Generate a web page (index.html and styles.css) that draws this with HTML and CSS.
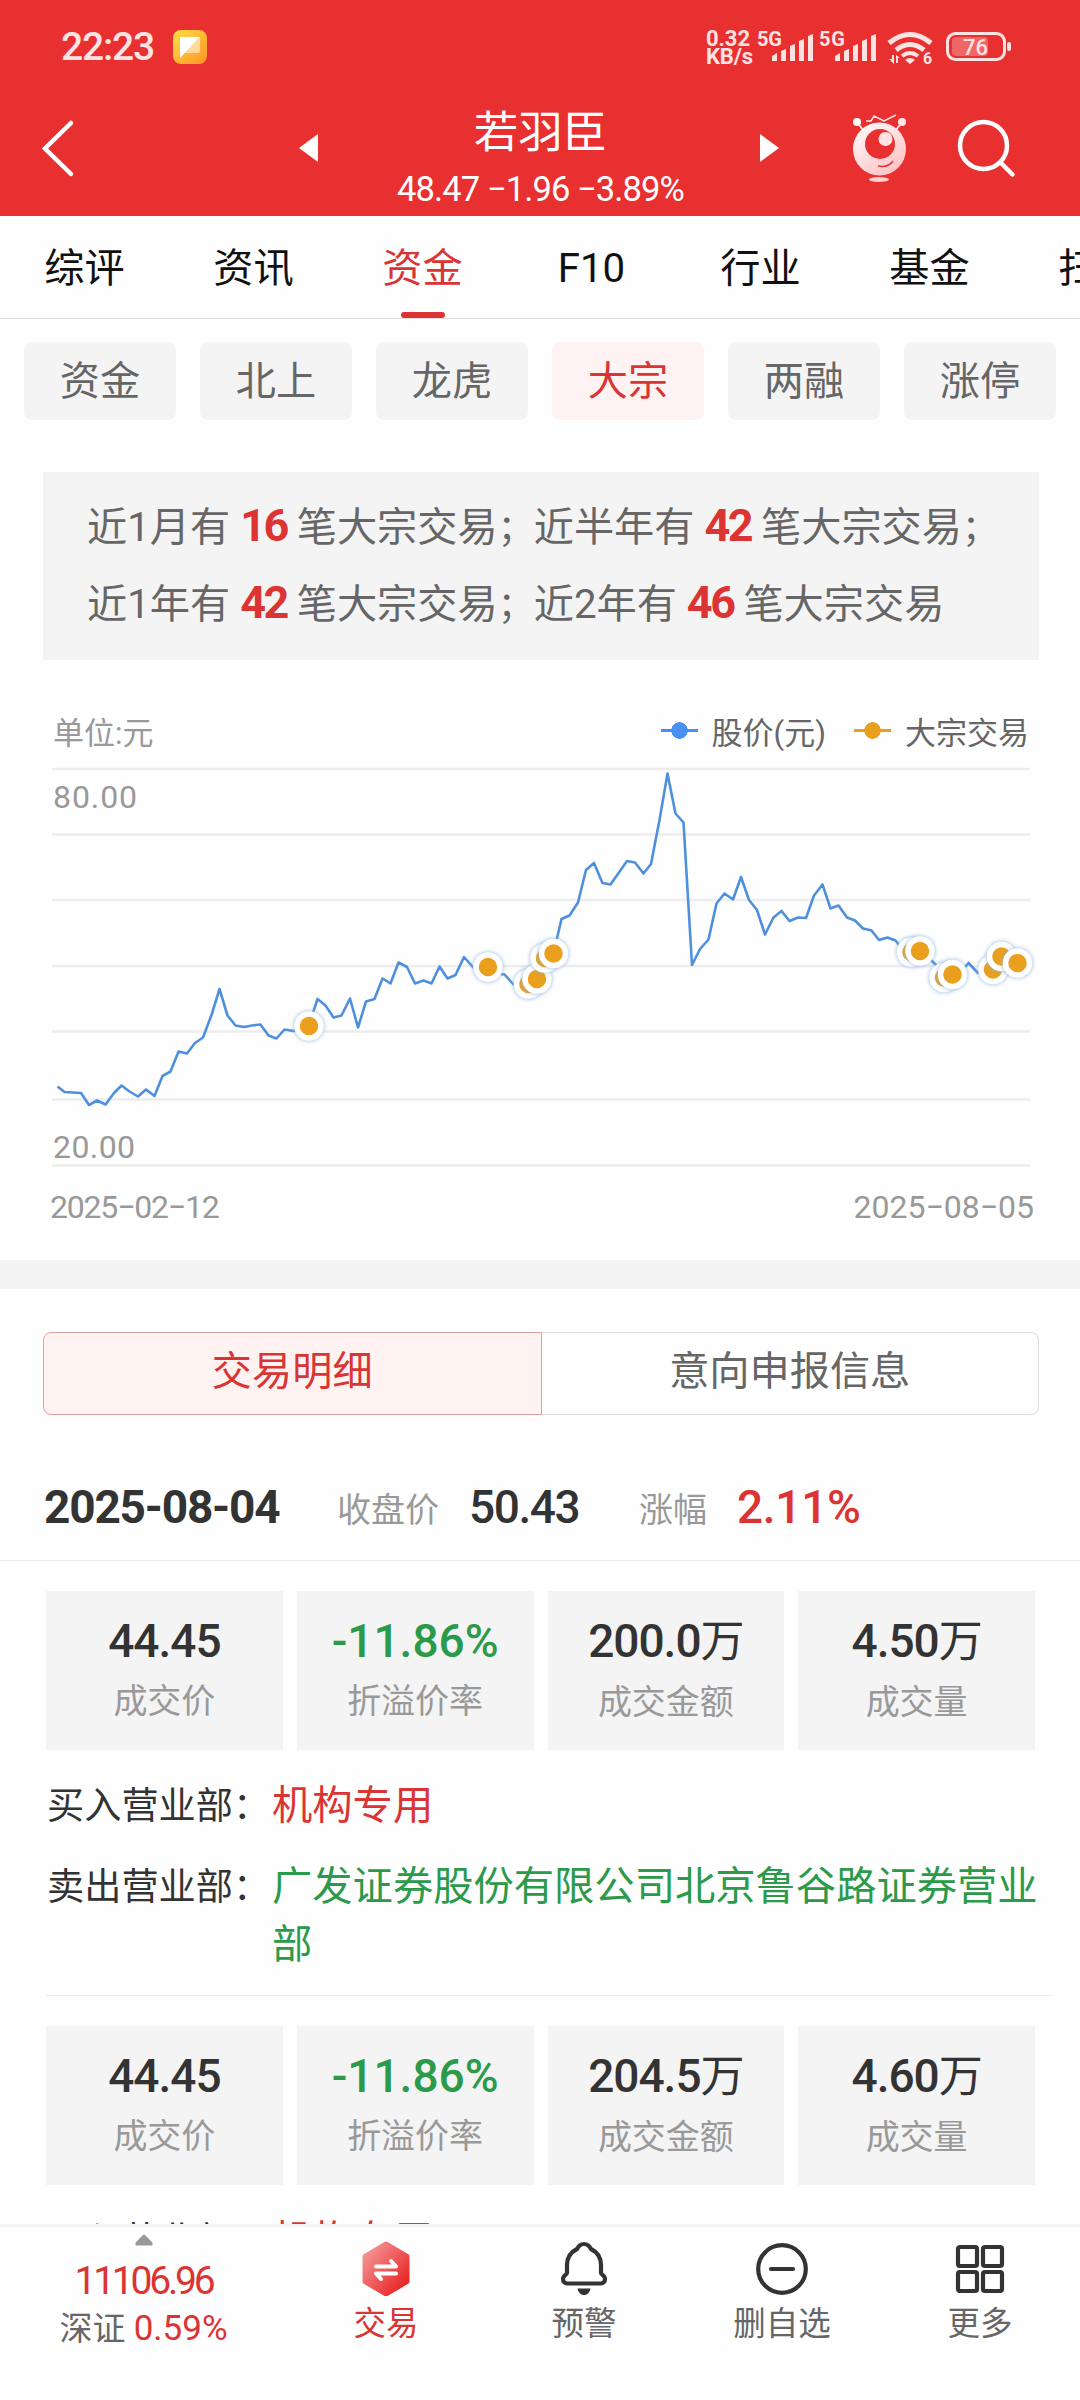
FILE: index.html
```
<!DOCTYPE html>
<html lang="zh-CN">
<head>
  <meta charset="UTF-8" />
  <title>若羽臣 - 大宗交易</title>
  <link rel="stylesheet" href="styles.css">
</head>
<body>
  <header class="header">
    <div class="status">
      <span class="time">22:23</span>
      <svg class="note-icon" viewBox="0 0 34 34">
        <defs>
          <linearGradient id="note" x1="0" y1="0" x2="1" y2="1">
            <stop offset="0" stop-color="#ffdf45" />
            <stop offset="1" stop-color="#ff9326" />
          </linearGradient>
        </defs>
        <rect width="34" height="34" rx="8" fill="url(#note)" />
        <path d="M27 7v14a2 2 0 0 1-2 2H12z" fill="#fff" opacity=".5" />
        <path d="M7 7h20L7 28z" fill="#fff" />
      </svg>
      <svg class="status-icons" viewBox="704 24 312 46">
        <g class="status-text">
          <text x="706" y="46" textLength="44">0.32</text>
          <text x="706" y="64" textLength="47">KB/s</text>
          <text x="757" y="46" font-size="20" textLength="25">5G</text>
          <text x="819" y="46" font-size="20" textLength="26">5G</text>
          <text x="923" y="64" font-size="16">6</text>
        </g>
        <g fill="#ffe3e3">
          <path d="M772 61v-5l5-3v8zM781 61v-10l5-2v12zM790 61v-15l5-2v17zM799 61v-20l5-2v22zM808 61v-25l5-2v27z" />
          <path d="M835 61v-5l5-3v8zM844 61v-10l5-2v12zM853 61v-15l5-2v17zM862 61v-20l5-2v22zM871 61v-25l5-2v27z" />
          <path d="M905 60q5-4 10 0l-5 4z" />
          <path d="M889 59h3v-4h2v9zM896 63v-8l4 3h-2v5z" />
          <rect x="1007" y="42" width="4" height="9" rx="2" />
        </g>
        <g fill="none" stroke="#ffe3e3" stroke-width="5">
          <path d="M889 43q21-17 42 0" />
          <path d="M896 50q14-11 28 0" />
          <path d="M902 56q8-6 16 0" stroke-width="4" />
        </g>
        <rect x="947.5" y="33.5" width="57" height="26" rx="8" fill="none" stroke="#ffe3e3" stroke-width="3" />
        <rect x="952" y="37" width="36" height="19" rx="4" fill="#f06565" />
        <text x="963" y="55" font-size="22" textLength="25" class="battery">76</text>
      </svg>
    </div>
    <div class="nav">
      <svg class="nav-back" viewBox="0 94 90 122"><path d="M71 123L45 148.5L71 174" /></svg>
      <svg class="nav-prev" viewBox="294 94 30 122"><path d="M299 148l19-14v28z" /></svg>
      <div class="title">
        <h1>若羽臣</h1>
        <p>48.47 −1.96 −3.89%</p>
      </div>
      <svg class="nav-next" viewBox="754 94 30 122"><path d="M779 148l-19-14v28z" /></svg>
      <svg class="nav-robot" viewBox="844 94 70 122">
        <defs>
          <linearGradient id="robot" x1="0" y1="0" x2=".7" y2="1">
            <stop offset="0" stop-color="#fff" />
            <stop offset="1" stop-color="#ffc3c5" />
          </linearGradient>
        </defs>
        <g fill="none" stroke="#ffe6e6" stroke-width="2">
          <path d="M857 122l6 8M902 122l-6 8" />
          <path d="M866 121h5l3-5 10 5 12-6" stroke-width="1.5" />
        </g>
        <circle cx="857" cy="122" r="4" fill="#fff" />
        <circle cx="902" cy="122" r="4" fill="#ffe6e6" />
        <circle cx="879.5" cy="149" r="26.5" fill="url(#robot)" />
        <circle cx="880" cy="144" r="15" fill="#e93030" />
        <circle cx="885.5" cy="139" r="7" fill="#ffe3e3" />
        <path d="M878 166q10 2 15-5" fill="none" stroke="#e93030" stroke-width="1.5" />
        <ellipse cx="879" cy="179.5" rx="10" ry="2.5" fill="#ffd0d0" />
      </svg>
      <svg class="nav-search" viewBox="949 94 70 122">
        <circle cx="983.5" cy="145.5" r="23.5" />
        <path d="M1001 163l11.5 11.5" />
      </svg>
    </div>
  </header>

  <nav class="tabs">
    <a>综评</a>
    <a>资讯</a>
    <a class="active">资金</a>
    <a>F10</a>
    <a>行业</a>
    <a>基金</a>
    <a>扫雷</a>
  </nav>

  <div class="pills">
    <a>资金</a>
    <a>北上</a>
    <a>龙虎</a>
    <a class="active">大宗</a>
    <a>两融</a>
    <a>涨停</a>
  </div>

  <div class="summary">
    <p>近1月有 <b>16</b> 笔大宗交易<i>；</i>近半年有 <b>42</b> 笔大宗交易<i>；</i></p>
    <p>近1年有 <b>42</b> 笔大宗交易<i>；</i>近2年有 <b>46</b> 笔大宗交易</p>
  </div>

  <section class="chart">
    <div class="legend">
      <span class="unit">单位:元</span>
      <span class="key price">股价(元)</span>
      <span class="key block">大宗交易</span>
    </div>
    <div class="plot">
      <svg viewBox="0 764 1080 410">
        <g stroke="#ededed" stroke-width="2.5">
          <path d="M52 769H1030M52 834.5H1030M52 900H1030M52 966H1030M52 1031.5H1030M52 1099.5H1030M52 1165.5H1030" />
        </g>
        <polyline class="price-line" points="57.5,1086.5 64.5,1092 81,1093 89,1105 97,1100.5 105.5,1104.5 114,1093 121.5,1085.5 129.5,1091.5 138,1096.5 146,1089.5 154.5,1096 162.5,1076 170.5,1071.5 178.5,1051.5 187,1053.5 195,1043 203,1037.5 211.5,1015 219.5,989 227.5,1015.5 235.5,1025.5 244,1027 252,1025.5 260.5,1024.5 268.5,1035.5 276.5,1038.5 284.5,1029.5 293.5,1031 308.5,1026.5 317.5,999 325.5,1005.5 333.5,1017.5 341.5,1015.5 350,998.5 358,1027.5 366,1001.5 374.5,999 382.5,978.5 390.5,983.5 398.5,962.5 407,967 415,983.5 423.5,980.5 431.5,983.5 439.5,966.5 447.5,978.5 455.5,975 464,957 472,966 480,975 488,967.5 496,973.5 504.5,974.5 513.5,984.5 520.5,985 528.5,984 537,979 545,958 553.5,953.5 561.5,919 569.5,915.5 578,902.5 586,870 594,863 602.5,883 610.5,884.5 627,861 635,862.5 643.5,873.5 651,864 659.5,820 667.5,773.5 675.5,813.5 683.5,822.5 692,965 700,949 708.5,939.5 716.5,903.5 724.5,893.5 733,899.5 741,877 749,900 757,910 765,934.5 773.5,917.5 781.5,911 789.5,921 798,917.5 806,918 814,895.5 822.5,884.5 830.5,908.5 838.5,905.5 847,917.5 855,920.5 863,928.5 871.5,930.5 879,940 887.5,937.5 895.5,940.5 903,950 911.5,952 920,951 928,957 936,965 944,977.5 952.5,974.5 961,972 968.5,963 978,973 993,969.5 1001.5,956.5 1017.5,963 1026,975.5" />
        <g class="deals">
          <circle cx="309" cy="1026" r="12" />
          <circle cx="488" cy="967" r="12" />
          <circle cx="528.5" cy="984" r="12" />
          <circle cx="537" cy="979" r="12" />
          <circle cx="545" cy="958" r="12" />
          <circle cx="553.5" cy="953.5" r="12" />
          <circle cx="911.5" cy="952" r="12" />
          <circle cx="920" cy="951" r="12" />
          <circle cx="944" cy="977.5" r="12" />
          <circle cx="952.5" cy="974.5" r="12" />
          <circle cx="993" cy="969.5" r="12" />
          <circle cx="1001.5" cy="956.5" r="12" />
          <circle cx="1017.5" cy="963" r="12" />
        </g>
        <g class="axis">
          <text x="53" y="808" textLength="84">80.00</text>
          <text x="53" y="1158" textLength="82">20.00</text>
        </g>
      </svg>
    </div>
    <div class="dates">
      <span class="from">2025−02−12</span>
      <span>2025−08−05</span>
    </div>
  </section>

  <div class="segment">
    <a class="active">交易明细</a>
    <a>意向申报信息</a>
  </div>

  <div class="day">
    <strong>2025-08-04</strong>
    <span class="label">收盘价</span>
    <span class="close">50.43</span>
    <span class="label">涨幅</span>
    <span class="change">2.11%</span>
  </div>

  <section class="deal">
    <div class="cards">
      <div class="card"><b>44.45</b><span>成交价</span></div>
      <div class="card"><b class="green">-11.86%</b><span>折溢价率</span></div>
      <div class="card"><b>200.0<i>万</i></b><span>成交金额</span></div>
      <div class="card"><b>4.50<i>万</i></b><span>成交量</span></div>
    </div>
    <div class="broker"><span>买入营业部：</span><em class="red">机构专用</em></div>
    <div class="broker"><span>卖出营业部：</span><em class="green">广发证券股份有限公司北京鲁谷路证券营业部</em></div>
  </section>

  <section class="deal">
    <div class="cards">
      <div class="card"><b>44.45</b><span>成交价</span></div>
      <div class="card"><b class="green">-11.86%</b><span>折溢价率</span></div>
      <div class="card"><b>204.5<i>万</i></b><span>成交金额</span></div>
      <div class="card"><b>4.60<i>万</i></b><span>成交量</span></div>
    </div>
    <div class="broker"><span>买入营业部：</span><em class="red">机构专用</em></div>
  </section>

  <footer class="footer">
    <div class="index">
      <svg viewBox="0 0 20 12"><path d="M10 1.5l7.5 7.5v1.500h-15V9z" /></svg>
      <b>11106.96</b>
      <p>深证 <span>0.59%</span></p>
    </div>
    <div class="item trade">
      <svg viewBox="0 0 56 56">
        <defs>
          <linearGradient id="hex" x1="0" y1="0" x2="1" y2="1">
            <stop offset="0" stop-color="#f6a0a0" />
            <stop offset=".85" stop-color="#e92a2a" />
          </linearGradient>
        </defs>
        <path d="M28 4L49 16.5V41.5L28 54L7 41.5V16.5z" fill="url(#hex)" stroke="url(#hex)" stroke-width="5" stroke-linejoin="round" />
        <path d="M18 26.5h20l-5-5.5M38 33.5H18l5 5.5" fill="none" stroke="#fff" stroke-width="4" stroke-linecap="round" stroke-linejoin="round" />
      </svg>
      <span>交易</span>
    </div>
    <div class="item">
      <svg viewBox="0 0 56 56">
        <path class="line" d="M28 4c-3.5 0-5.500 2-7 5-6 3-10 9-10 16v8c0 2-4 2-4 6 0 3 2 4.500 4 4.500h34c2 0 4-1.500 4-4.500 0-4-4-4-4-6v-8c0-7-4-13-10-16-1.500-3-3.500-5-7-5z" />
        <path d="M21.500 48.500h13c-1 4-3 6.500-6.500 6.500s-5.500-2.500-6.500-6.500z" fill="#333" />
      </svg>
      <span>预警</span>
    </div>
    <div class="item">
      <svg viewBox="0 0 56 56">
        <circle class="line" cx="28" cy="29" r="23.8" />
        <path class="line" d="M17 29h22" />
      </svg>
      <span>删自选</span>
    </div>
    <div class="item">
      <svg viewBox="0 0 56 56">
        <rect class="line" x="6" y="7" width="19" height="19" rx="2" />
        <rect class="line" x="31" y="7" width="19" height="19" rx="2" />
        <rect class="line" x="6" y="32" width="19" height="19" rx="2" />
        <rect class="line" x="31" y="32" width="19" height="19" rx="2" />
      </svg>
      <span>更多</span>
    </div>
  </footer>
</body>
</html>
```
FILE: styles.css
```
* {
  box-sizing: border-box;
}
body {
  margin: 0;
  height: 2400px;
  overflow: hidden;
  background: #fefefe;
  color: #333;
  font-family: Roboto, "Noto Sans CJK SC", sans-serif;
  font-size: 40.2px;
}
h1, p {
  margin: 0;
}
i, em {
  font-style: normal;
}
svg {
  display: block;
}
.green { color: #2b9a4a; }
.red { color: #d93535; }

/* header */
.header {
  height: 216px;
  background: #e93030;
  color: #fff;
}
.status {
  display: flex;
  align-items: center;
  height: 94px;
  padding: 0 64px 0 61px;
}
.time {
  width: 112px;
  font-size: 39px;
  font-weight: 500;
  letter-spacing: -1.2px;
  color: #ffe3e3;
}
.note-icon {
  width: 34px;
  height: 34px;
}
.status-icons {
  width: 312px;
  height: 46px;
  margin-left: auto;
}
.status-text {
  font-size: 22px;
  font-weight: 700;
  fill: #ffe3e3;
}
.battery {
  font-weight: 500;
  fill: #ffe3e3;
}
.nav {
  display: flex;
  height: 122px;
}
.nav svg {
  height: 122px;
}
.nav-back {
  width: 90px;
  fill: none;
  stroke: #fff;
  stroke-width: 4.5;
  stroke-linecap: round;
}
.nav-prev,
.nav-next {
  width: 30px;
  fill: #fff;
}
.nav-prev {
  margin-left: 204px;
}
.nav-robot {
  width: 70px;
  margin-left: 60px;
}
.nav-search {
  width: 70px;
  margin-left: 35px;
  fill: none;
  stroke: #fff;
  stroke-width: 4.5;
  stroke-linecap: round;
}
.title {
  width: 430px;
  padding-top: 10px;
  padding-left: 3px;
  text-align: center;
}
.title h1 {
  font-size: 44.5px;
  font-weight: 400;
  line-height: 58px;
}
.title p {
  font-size: 34.5px;
  line-height: 54px;
  letter-spacing: -0.9px;
}

/* tabs */
.tabs {
  display: flex;
  height: 103px;
  overflow: hidden;
  border-bottom: 1px solid #ddd;
}
.tabs a {
  flex: 0 0 169px;
  display: flex;
  flex-direction: column;
  align-items: center;
  line-height: 105px;
  color: #111;
}
.tabs a.active {
  color: #d93535;
}
.tabs a.active::after {
  content: "";
  width: 44px;
  height: 6px;
  margin-top: -9px;
  border-radius: 3px;
  background: #dc3333;
}

.pills {
  display: flex;
  gap: 24px;
  padding: 23px 24px 0;
}
.pills a {
  flex: 1;
  height: 78px;
  border-radius: 8px;
  background: #f4f4f4;
  color: #666;
  line-height: 79px;
  text-align: center;
}
.pills a.active {
  background: #fff2f2;
  color: #d93535;
}

.summary {
  height: 188px;
  margin: 52px 41px 0 43px;
  padding: 17px 0 17px 44px;
  background: #f4f4f4;
  color: #666;
  line-height: 77px;
  white-space: nowrap;
}
.summary b {
  font-size: 45px;
  line-height: 1;
  letter-spacing: -2.5px;
  color: #dc3333;
}
.summary i {
  font-size: 36px;
  line-height: 1;
}

/* chart */
.chart {
  height: 629px;
  padding-top: 70px;
  border-bottom: 29px solid #f4f4f4;
}
.legend {
  display: flex;
  align-items: center;
  height: 0;
  padding: 0 51px 0 53px;
  font-size: 31px;
  color: #666;
}
.unit {
  margin-right: auto;
  color: #999;
}
.key {
  display: flex;
  align-items: center;
}
.key::before {
  content: "";
  width: 37px;
  height: 17px;
  margin-right: 14px;
}
.price::before {
  background: radial-gradient(circle, #4a90f0 8px, transparent 8.5px), linear-gradient(#4a90f0, #4a90f0) center / 100% 3px no-repeat;
}
.block {
  margin-left: 28px;
}
.block::before {
  background: radial-gradient(circle, #ea9f1e 8px, transparent 8.5px), linear-gradient(#ea9f1e, #ea9f1e) center / 100% 3px no-repeat;
}
.plot {
  height: 410px;
  margin-top: 34px;
}
.plot svg {
  width: 1080px;
  height: 410px;
}
.price-line {
  fill: none;
  stroke: #4f90de;
  stroke-width: 2.6;
  stroke-linejoin: round;
}
.deals circle {
  fill: #ea9f1e;
  stroke: #fff;
  stroke-width: 5.5;
  filter: drop-shadow(0 0 2px #8fb4df);
}
.axis {
  font-size: 32px;
  fill: #999;
}
.dates {
  display: flex;
  justify-content: space-between;
  padding: 12px 46px 0 50px;
  font-size: 32px;
  line-height: 42px;
  color: #999;
}
.from {
  letter-spacing: -1.2px;
}

/* trade list */
.segment {
  display: flex;
  height: 83px;
  margin: 43px 41px 1px 43px;
}
.segment a {
  flex: 1;
  border: 1px solid #ddd;
  border-left: 0;
  border-radius: 0 8px 8px 0;
  color: #666;
  line-height: 78px;
  text-align: center;
}
.segment a.active {
  border: 1px solid #dba0a0;
  border-radius: 8px 0 0 8px;
  background: #fff3f2;
  color: #d93535;
}
.day {
  display: flex;
  align-items: center;
  height: 145px;
  padding: 38px 0 0 44px;
  border-bottom: 1px solid #e9e9e9;
  font-size: 46px;
  white-space: nowrap;
}
.day strong {
  width: 293px;
  letter-spacing: -1.2px;
}
.day .label {
  font-size: 34px;
  color: #999;
}
.close {
  width: 170px;
  margin-left: 30px;
  font-weight: 500;
  letter-spacing: -1.4px;
}
.change {
  margin-left: 30px;
  font-weight: 500;
  letter-spacing: -0.3px;
  color: #dc3333;
}
.deal {
  margin: 30px 27px 0 46px;
  padding-bottom: 10px;
  border-bottom: 1px solid #ececec;
}
.cards {
  display: flex;
  gap: 14px;
  padding-right: 18px;
  margin-bottom: 15px;
}
.card {
  flex: 1;
  height: 159px;
  padding-top: 20px;
  background: #f4f4f4;
  text-align: center;
}
.card b {
  display: block;
  font-size: 46px;
  font-weight: 500;
  line-height: 60px;
  letter-spacing: -1px;
}
.card b.green {
  letter-spacing: 0;
}
.card i {
  font-size: 44px;
  font-weight: 400;
}
.card span {
  display: block;
  font-size: 34px;
  line-height: 60px;
  color: #999;
}
.broker {
  display: flex;
  padding: 12px 0 11px 1px;
  line-height: 58px;
}
.broker span {
  width: 225px;
  font-size: 37.2px;
  white-space: nowrap;
}
.broker em {
  flex: 1;
  font-size: 40.3px;
}

/* bottom bar */
.footer {
  position: fixed;
  left: 0;
  top: 2224px;
  display: flex;
  width: 1080px;
  height: 176px;
  border-top: 3px solid #f4f4f4;
  background: #fefefe;
}
.index {
  width: 287px;
  padding-top: 7px;
  text-align: center;
  color: #dc3333;
}
.index svg {
  width: 20px;
  height: 12px;
  margin: 0 auto;
  fill: #999;
  stroke: #999;
  stroke-width: 2;
  stroke-linejoin: round;
}
.index b {
  display: block;
  font-size: 39px;
  font-weight: 400;
  line-height: 70px;
  letter-spacing: -3.2px;
}
.index p {
  margin-top: -15px;
  font-size: 33px;
  line-height: 56px;
  color: #666;
}
.index span {
  font-size: 35px;
  color: #dc3333;
}
.item {
  width: 198px;
  padding-top: 13px;
  text-align: center;
  font-size: 32.5px;
  line-height: 56px;
  color: #666;
}
.item svg {
  width: 56px;
  height: 56px;
  margin: 0 auto;
}
.item .line {
  fill: none;
  stroke: #333;
  stroke-width: 4.2;
  stroke-linecap: round;
}
.trade {
  color: #d93535;
}
```
